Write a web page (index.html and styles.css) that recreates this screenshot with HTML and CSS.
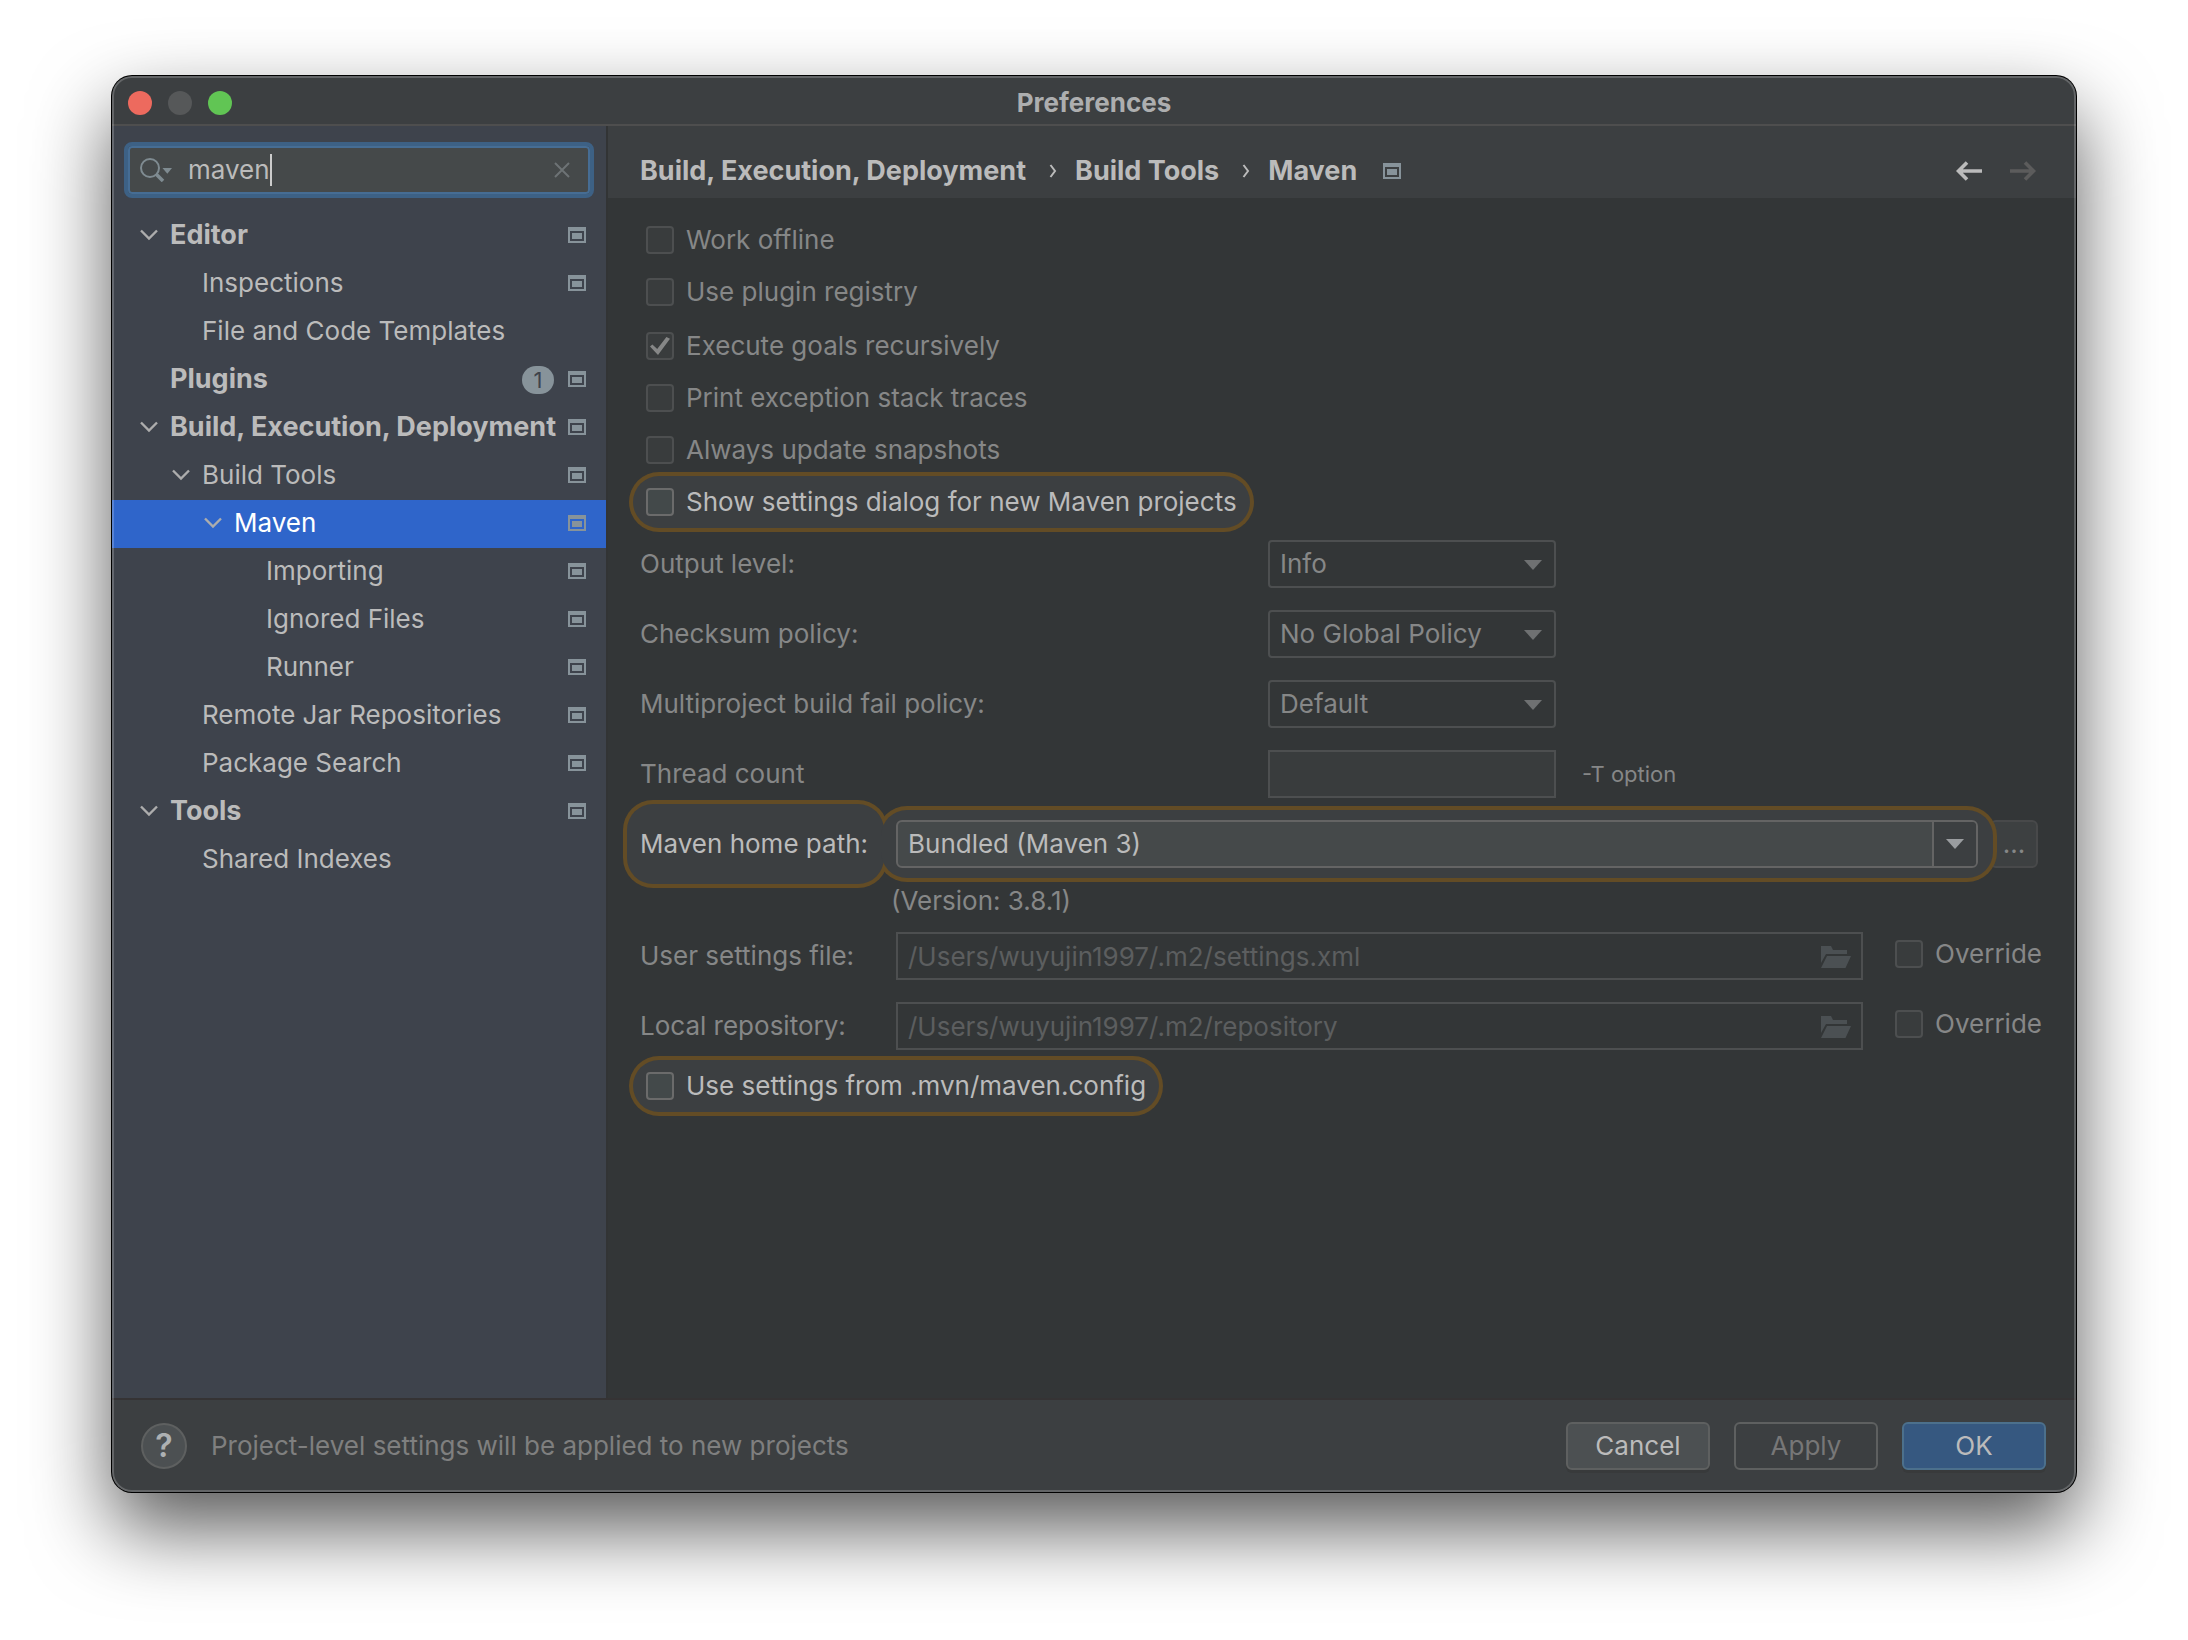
FILE: index.html
```html
<!DOCTYPE html>
<html lang="en">
<head>
<meta charset="utf-8">
<title>Preferences</title>
<link rel="stylesheet" href="styles.css">
</head>
<body>
<svg class="sprite" aria-hidden="true">
  <symbol id="chevron" viewBox="0 0 18 12"><path d="M1 1.5 9 9.5 17 1.5" fill="none" stroke="currentColor" stroke-width="2.4"/></symbol>
  <symbol id="project" viewBox="0 0 18 16"><path fill="currentColor" fill-rule="evenodd" d="M0 0H18V16H0ZM2 4V14H16V4ZM4 6H14V12H4Z"/></symbol>
  <symbol id="folder" viewBox="0 0 30 22"><path fill="currentColor" d="M0 0H10L12 4H26V8H5L0 17ZM6 10H30L24.500 22H0Z"/></symbol>
  <symbol id="triangle" viewBox="0 0 18 10"><path fill="currentColor" d="M0 0H18L9 10Z"/></symbol>
  <symbol id="crumb" viewBox="0 0 8 14"><path d="M1.500 1 6 7 1.500 13" fill="none" stroke="currentColor" stroke-width="2"/></symbol>
</svg>
<div class="window">
  <header class="titlebar">
    <div class="lights"><span class="light close"></span><span class="light minimize"></span><span class="light zoom"></span></div>
    <h1>Preferences</h1>
  </header>
  <div class="body">
    <aside class="sidebar">
      <div class="search">
        <svg class="search-icon" viewBox="0 0 32 24"><circle cx="10" cy="10" r="9" fill="none" stroke="currentColor" stroke-width="2"/><path d="M16.500 16.500 23 23" stroke="currentColor" stroke-width="3.500"/><path d="M22.500 10H32L27.300 15.700Z" fill="currentColor"/></svg>
        <input type="text" value="maven" aria-label="Search settings">
        <span class="caret"></span>
        <button class="clear" type="button" aria-label="Clear"><svg viewBox="0 0 16 16"><path d="M1 1 15 15M15 1 1 15" stroke="currentColor" stroke-width="2"/></svg></button>
      </div>
      <nav>
        <ul class="tree">
          <li><a href="#" class="group"><svg class="chev"><use href="#chevron"/></svg><span>Editor</span><svg class="proj"><use href="#project"/></svg></a></li>
          <li><a href="#" class="l1"><span>Inspections</span><svg class="proj"><use href="#project"/></svg></a></li>
          <li><a href="#" class="l1"><span>File and Code Templates</span></a></li>
          <li><a href="#" class="group leaf"><span>Plugins</span><b class="badge">1</b><svg class="proj"><use href="#project"/></svg></a></li>
          <li><a href="#" class="group"><svg class="chev"><use href="#chevron"/></svg><span>Build, Execution, Deployment</span><svg class="proj"><use href="#project"/></svg></a></li>
          <li><a href="#" class="l1 open"><svg class="chev"><use href="#chevron"/></svg><span>Build Tools</span><svg class="proj"><use href="#project"/></svg></a></li>
          <li><a href="#" class="l2 open selected"><svg class="chev"><use href="#chevron"/></svg><span>Maven</span><svg class="proj"><use href="#project"/></svg></a></li>
          <li><a href="#" class="l3"><span>Importing</span><svg class="proj"><use href="#project"/></svg></a></li>
          <li><a href="#" class="l3"><span>Ignored Files</span><svg class="proj"><use href="#project"/></svg></a></li>
          <li><a href="#" class="l3"><span>Runner</span><svg class="proj"><use href="#project"/></svg></a></li>
          <li><a href="#" class="l1"><span>Remote Jar Repositories</span><svg class="proj"><use href="#project"/></svg></a></li>
          <li><a href="#" class="l1"><span>Package Search</span><svg class="proj"><use href="#project"/></svg></a></li>
          <li><a href="#" class="group"><svg class="chev"><use href="#chevron"/></svg><span>Tools</span><svg class="proj"><use href="#project"/></svg></a></li>
          <li><a href="#" class="l1"><span>Shared Indexes</span></a></li>
        </ul>
      </nav>
    </aside>
    <main class="main">
      <div class="crumbs">
        <a href="#">Build, Execution, Deployment</a>
        <svg class="sep"><use href="#crumb"/></svg>
        <a href="#">Build Tools</a>
        <svg class="sep"><use href="#crumb"/></svg>
        <a href="#">Maven</a>
        <svg class="proj"><use href="#project"/></svg>
        <div class="history">
          <button type="button" aria-label="Back"><svg viewBox="0 0 26 20"><path d="M26 10H3M11 1.500 2.500 10 11 18.500" fill="none" stroke="currentColor" stroke-width="3.600"/></svg></button>
          <button type="button" aria-label="Forward" disabled><svg viewBox="0 0 26 20"><path d="M0 10H23M15 1.500 23.500 10 15 18.500" fill="none" stroke="currentColor" stroke-width="3.600"/></svg></button>
        </div>
      </div>
      <form class="form">
        <div class="checks">
          <div class="check-group">
            <label class="check"><input type="checkbox"><span>Work offline</span></label>
            <label class="check"><input type="checkbox"><span>Use plugin registry</span></label>
          </div>
          <div class="check-group">
            <label class="check"><input type="checkbox" checked><span>Execute goals recursively</span></label>
            <label class="check"><input type="checkbox"><span>Print exception stack traces</span></label>
            <label class="check"><input type="checkbox"><span>Always update snapshots</span></label>
            <label class="check match"><input type="checkbox"><span>Show settings dialog for new Maven projects</span></label>
          </div>
        </div>
        <div class="policy">
          <label for="output">Output level:</label>
          <div class="select"><select id="output"><option>Info</option></select><svg><use href="#triangle"/></svg></div>
        </div>
        <div class="policy">
          <label for="checksum">Checksum policy:</label>
          <div class="select"><select id="checksum"><option>No Global Policy</option></select><svg><use href="#triangle"/></svg></div>
        </div>
        <div class="policy">
          <label for="fail">Multiproject build fail policy:</label>
          <div class="select"><select id="fail"><option>Default</option></select><svg><use href="#triangle"/></svg></div>
        </div>
        <div class="policy">
          <label for="threads">Thread count</label>
          <input class="field filled" id="threads" type="text">
          <small>-T option</small>
        </div>
        <div class="home">
          <div class="home-label match"><label for="home">Maven home path:</label></div>
          <div class="combo match"><input id="home" type="text" value="Bundled (Maven 3)"><button type="button" aria-label="Show list"><svg><use href="#triangle"/></svg></button></div>
          <button class="browse" type="button" aria-label="Browse"><span>...</span></button>
          <p class="version">(Version: 3.8.1)</p>
        </div>
        <div class="path">
          <label for="settings">User settings file:</label>
          <div class="file"><input class="field" id="settings" type="text" value="/Users/wuyujin1997/.m2/settings.xml" readonly><svg><use href="#folder"/></svg></div>
          <label class="check"><input type="checkbox"><span>Override</span></label>
        </div>
        <div class="path">
          <label for="repo">Local repository:</label>
          <div class="file"><input class="field" id="repo" type="text" value="/Users/wuyujin1997/.m2/repository" readonly><svg><use href="#folder"/></svg></div>
          <label class="check"><input type="checkbox"><span>Override</span></label>
        </div>
        <label class="check match"><input type="checkbox"><span>Use settings from .mvn/maven.config</span></label>
      </form>
    </main>
  </div>
  <footer class="footer">
    <button class="help" type="button" aria-label="Help">?</button>
    <p>Project-level settings will be applied to new projects</p>
    <button class="btn" type="button">Cancel</button>
    <button class="btn apply" type="button">Apply</button>
    <button class="btn ok" type="button">OK</button>
  </footer>
</div>
</body>
</html>
```
FILE: styles.css
```css
* { box-sizing: border-box; }

body {
  margin: 0;
  padding: 76px 112px 148px;
  background: #fff;
  color: #bbb;
  font: 26px/30px Inter, "Liberation Sans", sans-serif;
}

input, select, button { font: inherit; color: inherit; margin: 0; }
button { padding: 0; border: 0; background: none; }
a { color: inherit; text-decoration: none; }
p, h1, ul { margin: 0; padding: 0; }
svg { display: block; flex: none; }
.sprite { display: none; }

.window {
  position: relative;
  display: flex;
  flex-direction: column;
  min-height: calc(100vh - 224px);
  border-radius: 20px;
  background: #3c3f41;
  box-shadow: 0 0 0 1px #000, 0 36px 80px rgba(0, 0, 0, .66);
  overflow: clip;
}
.window::after {
  content: "";
  position: absolute;
  inset: 0;
  border: 2px solid rgba(255, 255, 255, .2);
  border-radius: 20px;
  pointer-events: none;
}

.titlebar {
  display: grid;
  grid-template-columns: 1fr auto 1fr;
  align-items: center;
  height: 50px;
  padding: 6px 16px 0;
  border-bottom: 2px solid #4e4e4e;
}
.titlebar h1 { color: #adaeaf; font-size: 26px; line-height: 30px; font-weight: 700; }
.lights { display: flex; gap: 16px; }
.light { width: 24px; height: 24px; border-radius: 50%; }
.close { background: #ed6a5e; }
.minimize { background: #565859; }
.zoom { background: #61c554; }

.body { display: flex; flex: 1; }

.sidebar {
  flex: none;
  width: 496px;
  padding-top: 16px;
  border-right: 2px solid #323435;
  background: #3e434c;
}
.search {
  display: flex;
  align-items: center;
  height: 56px;
  margin: 0 12px 14px;
  padding: 0 20px 0 12px;
  border: 4px solid #3d6185;
  border-radius: 8px;
  background: #45494a;
  box-shadow: inset 0 0 0 2px #466d94;
}
.search-icon { width: 32px; height: 24px; color: #7f8b91; margin-right: 14px; }
.search input {
  field-sizing: content;
  padding: 0 0 0 2px;
  border: 0;
  outline: 0;
  background: none;
}
.caret { width: 2px; height: 32px; background: #ccc; }
.clear { margin-left: auto; color: #6d7375; }
.clear svg { width: 16px; height: 16px; }

.tree { list-style: none; }
.tree a { display: flex; align-items: center; height: 48px; padding: 0 20px 3px 0; white-space: nowrap; }
.tree .group { padding-left: 28px; font-size: 27px; font-weight: 700; }
.tree .leaf { padding-left: 58px; }
.tree .l1 { padding-left: 90px; }
.tree .l1.open { padding-left: 60px; }
.tree .l2.open { padding-left: 92px; }
.tree .l3 { padding-left: 154px; }
.tree .selected { background: #2f65ca; color: #fff; }
.chev { width: 18px; height: 12px; margin-right: 12px; color: #adadad; }
.proj { width: 18px; height: 16px; color: #87939a; }
.tree .proj { margin-left: auto; }
.badge {
  width: 32px;
  height: 28px;
  margin: 2px 14px 0 auto;
  border-radius: 14px;
  background: #87939a;
  color: #3e434c;
  font-size: 22px;
  line-height: 28px;
  font-weight: 400;
  text-align: center;
}
.tree .badge + .proj { margin-left: 0; }

.main { flex: 1; background: #333637; }
.crumbs {
  display: flex;
  align-items: center;
  height: 72px;
  padding: 18px 40px 0 32px;
  background: #3c3f41;
  font-size: 27px;
  font-weight: 700;
}
.sep { width: 8px; height: 14px; margin: 0 18px 0 23px; }
.crumbs .proj { margin-left: 26px; }
.history { display: flex; gap: 28px; margin-left: auto; }
.history svg { width: 26px; height: 20px; }
.history button:disabled { color: #5c5c5c; }

.form {
  position: relative;
  z-index: 0;
  display: flex;
  flex-direction: column;
  align-items: stretch;
  gap: 22px;
  padding: 28px 34px 28px 32px;
  color: #868787;
}
.checks { display: flex; flex-direction: column; gap: 26px; margin: 0 0 2px 6px; }
.check-group { display: flex; flex-direction: column; gap: 24px; }
.check {
  position: relative;
  display: flex;
  align-items: center;
  align-self: flex-start;
  gap: 12px;
  height: 28px;
  white-space: nowrap;
}
.form > .check { margin-left: 6px; }
.check input {
  appearance: none;
  display: grid;
  place-items: center;
  width: 28px;
  height: 28px;
  border: 2px solid #4d4f50;
  border-radius: 4px;
  background: #393c3d;
}
.check input:checked::before {
  content: "";
  width: 20px;
  height: 18px;
  background: #868787;
  clip-path: polygon(0 53%, 12% 41%, 36% 67%, 82% 0, 100% 10%, 40% 100%);
}

/* Search hits: outlines sit below the fills so adjoining hits merge into one shape. */
.match { position: relative; color: #bbb; }
.match::before, .match::after {
  content: "";
  position: absolute;
  inset: -16px -17px;
  border-radius: 30px;
  z-index: -2;
  background: #634c25;
}
.match::after {
  z-index: -1;
  border: 4px solid transparent;
  background: #3c3f41 padding-box;
}
.match.check input { border-color: #6b6b6b; background: #43494a; }

.policy { display: grid; grid-template-columns: 628px 288px auto; align-items: center; height: 48px; }
.policy small { margin-left: 26px; font-size: 22px; }
.select { position: relative; }
.select select {
  appearance: none;
  display: block;
  width: 100%;
  height: 48px;
  padding: 0 10px;
  border: 2px solid #4d4f50;
  border-radius: 4px;
  background: none;
}
.select svg { position: absolute; right: 14px; top: 20px; width: 18px; height: 10px; color: #6f7172; }
.field {
  display: block;
  width: 100%;
  height: 48px;
  padding: 0 10px;
  border: 2px solid #4d4f50;
  border-radius: 0;
  outline: 0;
  background: none;
}
.filled { background: #393c3d; }

.home { display: grid; grid-template-columns: 256px 1fr 48px; margin-right: 4px; align-items: center; }
.home-label { justify-self: start; }
.home-label::before, .home-label::after { inset: -29px -20px -29px -17px; }
.combo { display: flex; height: 48px; margin-right: 12px; border: 2px solid #646464; border-radius: 6px; background: #45494a; }
.combo::before, .combo::after { inset: -16px -21px; }
.combo input { flex: 1; min-width: 0; padding: 0 10px; border: 0; outline: 0; background: none; }
.combo button { display: grid; place-items: center; width: 44px; border-left: 2px solid #646464; border-radius: 0 4px 4px 0; background: #3c3f41; color: #9a9da0; }
.combo svg { width: 18px; height: 10px; }
.browse { position: relative; z-index: -3; height: 48px; border: 2px solid #48494a; border-radius: 6px; background: #3d4041; color: #868787; }
.version { grid-column: 1 / -1; height: 42px; padding: 18px 0 0 251px; }

.path { display: grid; grid-template-columns: 256px 1fr auto; align-items: center; height: 48px; }
.path .check { align-self: center; margin: 0 0 4px 32px; }
.file { position: relative; color: #5c5e5f; }
.file svg { position: absolute; right: 12px; top: 14px; width: 30px; height: 22px; color: #4b5053; }

.footer {
  display: flex;
  align-items: center;
  gap: 24px;
  height: 94px;
  padding: 0 30px 0 29px;
  border-top: 2px solid #353334;
}
.footer p { flex: 1; color: #7f7f7f; }
.help {
  width: 46px;
  height: 46px;
  border: 2px solid #5e6060;
  border-radius: 50%;
  background: #4c5052;
  color: #adb0b2;
  font-size: 32px;
  font-weight: 600;
}
.btn { width: 144px; height: 48px; border: 2px solid #5e6060; border-radius: 6px; background: #4c5052; box-shadow: 0 3px 0 rgba(50, 50, 50, .35); }
.apply { background: none; color: #777; box-shadow: none; }
.ok { border-color: #4c708c; background: #365880; }
```
